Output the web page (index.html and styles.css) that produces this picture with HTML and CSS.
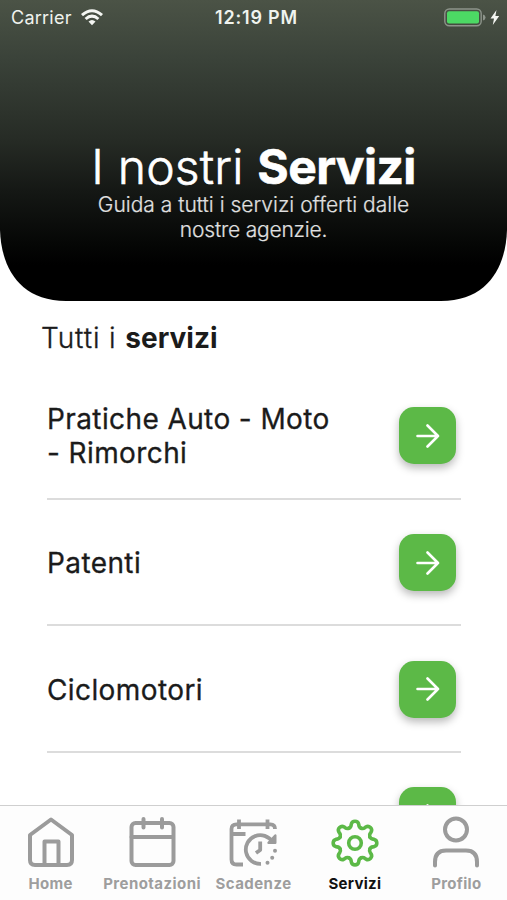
FILE: index.html
```html
<!DOCTYPE html>
<html lang="it">
<head>
<meta charset="utf-8">
<title>Servizi</title>
<link rel="stylesheet" href="styles.css">
</head>
<body>
<div class="app">
  <header class="hero">
    <div class="status">
      <div class="carrier"><span>Carrier</span>
        <svg width="22" height="17" viewBox="0 0 22 17"><g fill="none" stroke="#f4f6f2" stroke-width="3"><path d="M1 6.200Q11-2.800 21 6.200"/><path d="M4.600 10Q11 4.200 17.400 10"/></g><path d="M7.500 12.400Q11 9.400 14.500 12.400L11 16.300Z" fill="#f4f6f2"/></svg>
      </div>
      <time>12:19 PM</time>
      <div class="power">
        <svg width="56" height="19" viewBox="0 0 56 19"><rect x=".8" y="1" width="36.4" height="16.800" rx="4.500" fill="none" stroke="#8d948b" stroke-width="1.400"/><rect x="3" y="3.300" width="32" height="12.200" rx="2" fill="#4cd964"/><path d="M39 6.500Q41.500 7 41.500 9.400T39 12.400Z" fill="#8d948b"/><path d="M52.500 2L46.500 10.600H50L48.800 17L55.200 8H51.400Z" fill="#f4f6f2"/></svg>
      </div>
    </div>
    <h1 class="title">I nostri <b>Servizi</b></h1>
    <p class="subtitle">Guida a tutti i servizi offerti dalle<br><span class="tight">nostre agenzie.</span></p>
  </header>
  <main class="content">
    <h2 class="section">Tutti i <b>servizi</b></h2>
    <ul class="list">
      <li class="row"><span class="name">Pratiche Auto - Moto<br>- Rimorchi</span><button class="go" aria-label="Apri"><svg class="arrow" viewBox="0 0 24 24"><path d="M1.500 12H22M11.500 1.500L22 12L11.500 22.500"/></svg></button></li>
      <li class="row"><span class="name">Patenti</span><button class="go" aria-label="Apri"><svg class="arrow" viewBox="0 0 24 24"><path d="M1.500 12H22M11.500 1.500L22 12L11.500 22.500"/></svg></button></li>
      <li class="row"><span class="name">Ciclomotori</span><button class="go" aria-label="Apri"><svg class="arrow" viewBox="0 0 24 24"><path d="M1.500 12H22M11.500 1.500L22 12L11.500 22.500"/></svg></button></li>
      <li class="row"><span class="name"></span><button class="go" aria-label="Apri"><svg class="arrow" viewBox="0 0 24 24"><path d="M1.500 12H22M11.500 1.500L22 12L11.500 22.500"/></svg></button></li>
    </ul>
  </main>
  <nav class="tabs">
    <a class="tab"><svg class="icon" viewBox="0 0 52 54"><path d="M26 3.500L5 19V44Q5 49 10 49H42Q47 49 47 44V19ZM19.500 49V25.500H33.500V49"/></svg><span>Home</span></a>
    <a class="tab tab-book"><svg class="icon" viewBox="0 0 52 54"><rect x="5.500" y="7" width="42" height="42" rx="4"/><path d="M5.500 21H47M17.500 3V11.500M36 3V11.500"/></svg><span>Prenotazioni</span></a>
    <a class="tab tab-dates"><svg class="icon" viewBox="0 0 52 54"><path d="M16 48.500H9.500Q4.500 48.500 4.500 43.500V13Q4.500 8.300 9.500 8.300H43.500Q48 8.300 48 13M4.500 18H18.500M12 3.500V13M40.500 3.500V13"/><path d="M34 47.900A14.400 14.400 0 1 1 45.500 26M33.200 25.500V34L29 37"/><path class="head" d="M48.300 19.500V26.800H41.500Z"/><g class="dots"><circle cx="48" cy="34.700" r="2"/><circle cx="45.200" cy="41.700" r="2"/><circle cx="40.500" cy="46.700" r="2"/></g></svg><span>Scadenze</span></a>
    <a class="tab active"><svg class="icon" viewBox="-26 -27 52 54"><defs><path id="tooth" d="M-6.100-14.800C-3.200-16-4.200-18-3.600-19.200C-2.700-22.700 2.700-22.700 3.600-19.200C4.200-18 3.200-16 6.100-14.800"/></defs><use href="#tooth"/><use href="#tooth" transform="rotate(45)"/><use href="#tooth" transform="rotate(90)"/><use href="#tooth" transform="rotate(135)"/><use href="#tooth" transform="rotate(180)"/><use href="#tooth" transform="rotate(225)"/><use href="#tooth" transform="rotate(270)"/><use href="#tooth" transform="rotate(315)"/><circle r="6.300"/></svg><span>Servizi</span></a>
    <a class="tab"><svg class="icon" viewBox="0 0 52 54"><circle cx="26" cy="13.500" r="11"/><path d="M5 49.500V46Q5 34.500 16 34.500H36Q47 34.500 47 46V49.500"/></svg><span>Profilo</span></a>
  </nav>
</div>
</body>
</html>
```

FILE: styles.css
```css
* { box-sizing: border-box; }
body {
  margin: 0;
  background: #fff;
  color: #1b1b1b;
  font-family: Inter, sans-serif;
}
.app {
  display: flex;
  flex-direction: column;
  width: 507px;
  height: 900px;
  overflow: hidden;
}
.hero {
  flex: none;
  height: 301px;
  background: linear-gradient(#4b5346 0, #3a4239 60px, #262b25 140px, #151815 190px, #050605 245px, #000 265px);
  clip-path: path("M0 0H507V230C506 265 489 301 441 301H66C18 301 1 265 0 230Z");
  color: #fff;
  text-align: center;
}
.status {
  display: grid;
  grid-template-columns: 1fr auto 1fr;
  align-items: center;
  height: 35px;
  padding: 0 7px 0 11px;
  font-size: 18px;
  color: #f0f3ee;
}
.carrier { display: flex; align-items: center; gap: 9px; letter-spacing: .25px; }
.status time { font-weight: 600; letter-spacing: .8px; margin-left: 2px; }
.power { display: flex; justify-content: flex-end; }
.title {
  margin: 103px 0 0;
  font-size: 48px;
  line-height: 58px;
  font-weight: 300;
  letter-spacing: .2px;
  -webkit-text-stroke: .6px currentColor;
  white-space: nowrap;
}
.title b { font-weight: 700; letter-spacing: -.6px; }
.subtitle {
  margin: -4px 0 0;
  font-size: 21px;
  line-height: 25px;
  font-weight: 300;
  -webkit-text-stroke: .2px currentColor;
  color: #e0e0e0;
}
.tight { letter-spacing: -.2px; }
.content {
  flex: 1;
  min-height: 0;
  overflow: hidden;
  padding: 20px 46px 0 47px;
}
.section {
  margin: 0 0 0 -6px;
  font-size: 28px;
  line-height: 34px;
  font-weight: 300;
  letter-spacing: .9px;
  -webkit-text-stroke: .35px currentColor;
}
.section b { font-weight: 700; letter-spacing: 0; -webkit-text-stroke: 0; }
.list { list-style: none; margin: 18px 0 0; padding: 0; }
.row {
  display: flex;
  align-items: center;
  justify-content: space-between;
  height: 126.700px;
  padding: 1px 5px 0 0;
  border-bottom: 2px solid #dcdcdc;
}
.name {
  padding-top: 1px;
  font-size: 28px;
  line-height: 34px;
  font-weight: 400;
  letter-spacing: .4px;
  -webkit-text-stroke: .3px currentColor;
  white-space: nowrap;
}
.go {
  display: flex;
  align-items: center;
  justify-content: center;
  width: 57px;
  height: 57px;
  padding: 0;
  border: 0;
  border-radius: 15px;
  background: #5cb947;
  box-shadow: 0 4px 9px rgba(0, 0, 0, .28);
}
.arrow {
  width: 24px;
  height: 24px;
  fill: none;
  stroke: #fff;
  stroke-width: 2.6;
  stroke-linecap: round;
  stroke-linejoin: round;
}
.tabs {
  flex: none;
  display: grid;
  grid-template-columns: repeat(5, 1fr);
  height: 95px;
  border-top: 1px solid #cfcfcf;
  background: #fdfdfd;
}
.tab {
  display: flex;
  flex-direction: column;
  align-items: center;
  padding-top: 10px;
  font-size: 15px;
  line-height: 18px;
  font-weight: 700;
  letter-spacing: .3px;
  color: #9e9e9e;
}
.tab-book, .tab-dates { letter-spacing: .45px; }
.tab span { margin-top: 5px; white-space: nowrap; }
.icon {
  width: 52px;
  height: 54px;
  fill: none;
  stroke: #9b9b9b;
  stroke-width: 4;
  stroke-linecap: round;
  stroke-linejoin: round;
}
.tab-dates .icon { stroke-width: 3.8; stroke-linecap: butt; }
.tab-dates .head { fill: #9b9b9b; stroke-width: 2.4; }
.dots { fill: #9b9b9b; stroke: none; }
.active { color: #111; }
.active .icon { stroke: #5cb947; stroke-width: 3.6; }
```
